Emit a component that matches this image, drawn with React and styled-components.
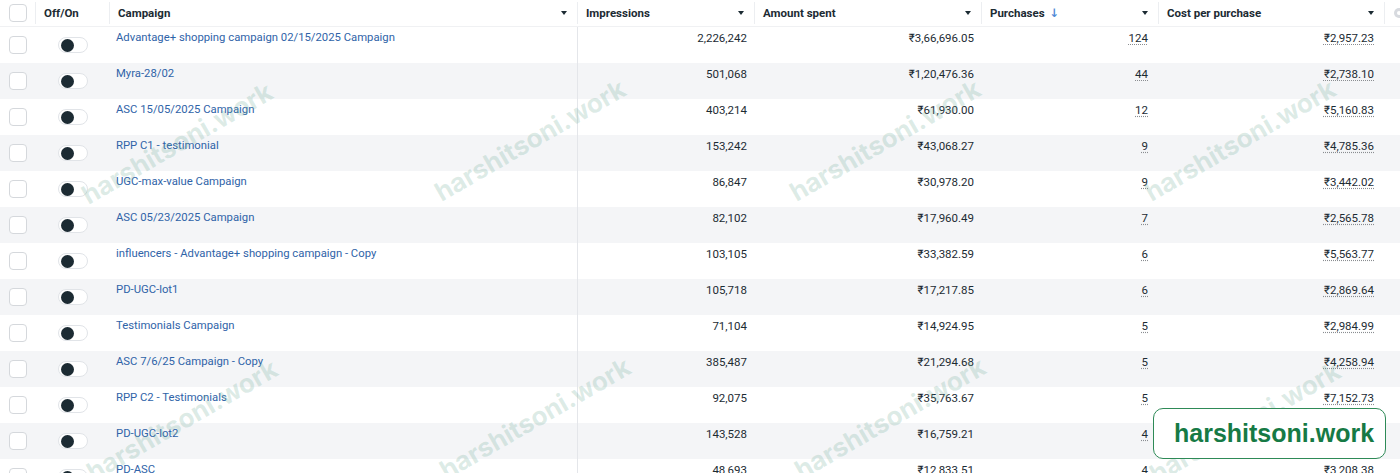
import React from "react";
import styled, { createGlobalStyle } from "styled-components";

const GlobalStyle = createGlobalStyle`
  html, body {
    margin: 0;
    padding: 0;
    background: #ffffff;
    font-family: Roboto, "Noto Sans", "DejaVu Sans", sans-serif;
    -webkit-font-smoothing: antialiased;
  }
`;

const COLS = "36px 74px 468px 177px 227px 177px 226px 1fr";

const Page = styled.div`
  position: relative;
  width: 1400px;
  height: 473px;
  overflow: hidden;
  background: #fff;
`;

const HeaderRow = styled.div`
  display: grid;
  grid-template-columns: ${COLS};
  height: 27px;
  border-bottom: 1px solid #f0f1f3;
  box-sizing: border-box;
`;

const HeadCell = styled.div`
  display: flex;
  align-items: center;
  justify-content: ${({ $center }) => ($center ? "center" : "space-between")};
  padding: 0 ${({ $center }) => ($center ? "0" : "8px")};
  font-size: 11.5px;
  font-weight: 700;
  color: #1c2b33;
  border-right: ${({ $noLine }) => ($noLine ? "none" : "1px solid #eceef1")};
  margin: 2px 0;
`;

const Caret = styled.span`
  width: 0;
  height: 0;
  border-left: 3px solid transparent;
  border-right: 3px solid transparent;
  border-top: 4px solid #1c2b33;
  margin-right: 2px;
`;

const SortArrow = styled.span`
  color: #4f8ad6;
  font-weight: 700;
  margin-left: 5px;
`;

const Row = styled.div`
  display: grid;
  grid-template-columns: ${COLS};
  height: 36px;
  background: ${({ $alt }) => ($alt ? "#f4f5f7" : "#ffffff")};
`;

const Cell = styled.div`
  display: flex;
  align-items: flex-start;
  justify-content: ${({ $right }) => ($right ? "flex-end" : "flex-start")};
  padding: 4px ${({ $pad }) => $pad || 8}px 0 6px;
  font-size: 11.5px;
  color: #1c2b33;
  white-space: nowrap;
  border-right: ${({ $line }) => ($line ? "1px solid #e4e6ea" : "none")};
`;

const BoxCell = styled.div`
  display: flex;
  justify-content: center;
  align-items: flex-start;
  padding-top: 9px;
`;

const Checkbox = styled.span`
  width: 18px;
  height: 18px;
  border: 1px solid #d5d8dc;
  border-radius: 4px;
  background: #fff;
  box-sizing: border-box;
`;

const ToggleCell = styled.div`
  padding: 10px 0 0 22px;
`;

const Toggle = styled.span`
  display: flex;
  align-items: center;
  width: 30px;
  height: 16px;
  border: 1px solid #e1e4e8;
  border-radius: 8px;
  background: #fff;
  box-sizing: border-box;
  padding-left: 2px;

  &::before {
    content: "";
    width: 13px;
    height: 13px;
    border-radius: 50%;
    background: #1c2b33;
  }
`;

const CampaignLink = styled.a`
  color: #2f63a8;
  text-decoration: none;
  font-size: 11.3px;
`;

const Dotted = styled.span`
  text-decoration: underline dotted #8a8d91;
  text-underline-offset: 2px;
`;

const Watermark = styled.div`
  position: absolute;
  left: ${({ $x }) => $x}px;
  top: ${({ $y }) => $y}px;
  transform: translate(-50%, -50%) rotate(-30deg);
  font-family: Inter, "Liberation Sans", sans-serif;
  font-weight: 700;
  font-size: 26px;
  color: rgba(100, 165, 145, 0.22);
  white-space: nowrap;
  pointer-events: none;
`;

const Badge = styled.div`
  position: absolute;
  left: 1153px;
  top: 408px;
  width: 233px;
  height: 51px;
  box-sizing: border-box;
  border: 1.5px solid #2e8a57;
  border-radius: 10px;
  background: #fff;
  display: flex;
  align-items: center;
  padding-left: 20px;
  font-family: "Liberation Sans", Arial, sans-serif;
  font-weight: 700;
  font-size: 25px;
  color: #167a45;
`;

const rows = [
  ["Advantage+ shopping campaign 02/15/2025 Campaign", "2,226,242", "₹3,66,696.05", "124", "₹2,957.23"],
  ["Myra-28/02", "501,068", "₹1,20,476.36", "44", "₹2,738.10"],
  ["ASC 15/05/2025 Campaign", "403,214", "₹61,930.00", "12", "₹5,160.83"],
  ["RPP C1 - testimonial", "153,242", "₹43,068.27", "9", "₹4,785.36"],
  ["UGC-max-value Campaign", "86,847", "₹30,978.20", "9", "₹3,442.02"],
  ["ASC 05/23/2025 Campaign", "82,102", "₹17,960.49", "7", "₹2,565.78"],
  ["influencers - Advantage+ shopping campaign - Copy", "103,105", "₹33,382.59", "6", "₹5,563.77"],
  ["PD-UGC-lot1", "105,718", "₹17,217.85", "6", "₹2,869.64"],
  ["Testimonials Campaign", "71,104", "₹14,924.95", "5", "₹2,984.99"],
  ["ASC 7/6/25 Campaign - Copy", "385,487", "₹21,294.68", "5", "₹4,258.94"],
  ["RPP C2 - Testimonials", "92,075", "₹35,763.67", "5", "₹7,152.73"],
  ["PD-UGC-lot2", "143,528", "₹16,759.21", "4", "₹4,189.80"],
  ["PD-ASC", "48,693", "₹12,833.51", "4", "₹3,208.38"],
];

const marks = [
  [177, 143], [530, 140], [885, 140], [1240, 140],
  [182, 420], [535, 418], [890, 418], [1245, 422],
];

export default function App() {
  return (
    <Page>
      <GlobalStyle />
      <HeaderRow>
        <HeadCell $center>
          <Checkbox />
        </HeadCell>
        <HeadCell>Off/On</HeadCell>
        <HeadCell>
          Campaign <Caret />
        </HeadCell>
        <HeadCell>
          Impressions <Caret />
        </HeadCell>
        <HeadCell>
          Amount spent <Caret />
        </HeadCell>
        <HeadCell>
          <span>
            Purchases<SortArrow>↓</SortArrow>
          </span>
          <Caret />
        </HeadCell>
        <HeadCell>
          Cost per purchase <Caret />
        </HeadCell>
        <HeadCell $noLine>
          <svg width="12" height="12" viewBox="0 0 12 12">
            <circle cx="6" cy="6" r="5" fill="#d7dadf" />
            <circle cx="6" cy="6" r="2" fill="#fff" />
          </svg>
        </HeadCell>
      </HeaderRow>
      {rows.map(([name, imp, spent, purch, cpp], i) => (
        <Row key={name} $alt={i % 2 === 1}>
          <BoxCell>
            <Checkbox />
          </BoxCell>
          <ToggleCell>
            <Toggle />
          </ToggleCell>
          <Cell $line>
            <CampaignLink href="#">{name}</CampaignLink>
          </Cell>
          <Cell $right>{imp}</Cell>
          <Cell $right>{spent}</Cell>
          <Cell $right $pad={11}>
            <Dotted>{purch}</Dotted>
          </Cell>
          <Cell $right $pad={11}>
            <Dotted>{cpp}</Dotted>
          </Cell>
          <Cell />
        </Row>
      ))}
      {marks.map(([x, y]) => (
        <Watermark key={`${x}-${y}`} $x={x} $y={y}>
          harshitsoni.work
        </Watermark>
      ))}
      <Badge>harshitsoni.work</Badge>
    </Page>
  );
}
